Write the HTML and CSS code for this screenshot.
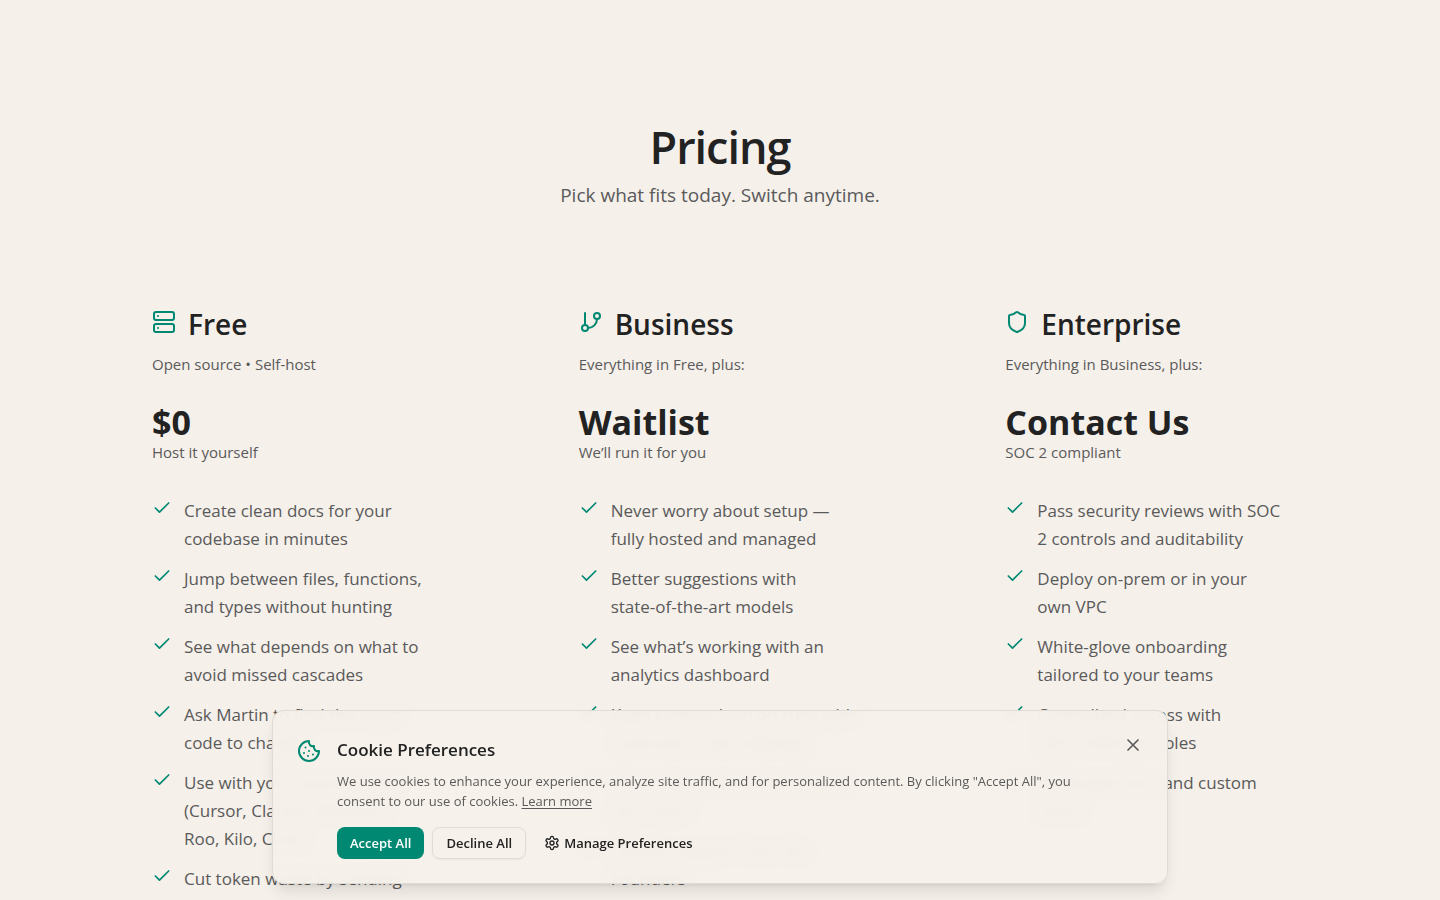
FILE: index.html
```html
<!DOCTYPE html>
<html lang="en">
<head>
    <meta charset="UTF-8">
    <meta name="viewport" content="width=device-width, initial-scale=1">
    <title>Pricing</title>
    <link rel="stylesheet" href="styles.css">
</head>
<body>
<svg class="sprite" aria-hidden="true">
    <symbol id="check" viewBox="0 0 24 24"><path d="M20 6 9 17l-5-5"/></symbol>
</svg>

<main class="pricing">
    <header class="intro">
        <h1>Pricing</h1>
        <p>Pick what fits today. Switch anytime.</p>
    </header>

    <div class="plans">
        <section class="plan">
            <div class="plan-title">
                <svg class="icon" viewBox="0 0 24 24"><rect x="2" y="2" width="20" height="8" rx="2"/><rect x="2" y="14" width="20" height="8" rx="2"/><path d="M6 6h.01M6 18h.01"/></svg>
                <h2>Free</h2>
            </div>
            <p class="note">Open source • Self-host</p>
            <p class="price">$0</p>
            <p class="note">Host it yourself</p>
            <ul class="features">
                <li><svg class="check"><use href="#check"/></svg><span>Create clean docs for your codebase in minutes</span></li>
                <li><svg class="check"><use href="#check"/></svg><span>Jump between files, functions, and types without hunting</span></li>
                <li><svg class="check"><use href="#check"/></svg><span>See what depends on what to avoid missed cascades</span></li>
                <li><svg class="check"><use href="#check"/></svg><span>Ask Martin to find the exact code to change</span></li>
                <li><svg class="check"><use href="#check"/></svg><span>Use with your favorite tools (Cursor, Claude, Windsurf,<br>Roo, Kilo, Cline)</span></li>
                <li><svg class="check"><use href="#check"/></svg><span>Cut token waste by sending only relevant pieces of code</span></li>
            </ul>
        </section>

        <section class="plan">
            <div class="plan-title">
                <svg class="icon" viewBox="0 0 24 24"><path d="M6 3v12"/><circle cx="18" cy="6" r="3"/><circle cx="6" cy="18" r="3"/><path d="M18 9a9 9 0 0 1-9 9"/></svg>
                <h2>Business</h2>
            </div>
            <p class="note">Everything in Free, plus:</p>
            <p class="price">Waitlist</p>
            <p class="note">We’ll run it for you</p>
            <ul class="features">
                <li><svg class="check"><use href="#check"/></svg><span>Never worry about setup — fully hosted and managed</span></li>
                <li><svg class="check"><use href="#check"/></svg><span>Better suggestions with <span class="nowrap">state-of-the-art</span> models</span></li>
                <li><svg class="check"><use href="#check"/></svg><span>See what’s working with an analytics dashboard</span></li>
                <li><svg class="check"><use href="#check"/></svg><span>Keep context lean on runs with automatic code indexing</span></li>
                <li><svg class="check"><use href="#check"/></svg><span>Share docs and context across your team</span></li>
                <li><svg class="check"><use href="#check"/></svg><span>Priority support from the Founders</span></li>
            </ul>
        </section>

        <section class="plan">
            <div class="plan-title">
                <svg class="icon" viewBox="0 0 24 24"><path d="M20 13c0 5-3.500 7.500-7.660 8.950a1 1 0 0 1-.67-.01C7.500 20.500 4 18 4 13V6a1 1 0 0 1 1-1c2 0 4.500-1.200 6.240-2.720a1.170 1.170 0 0 1 1.520 0C14.510 3.810 17 5 19 5a1 1 0 0 1 1 1z"/></svg>
                <h2>Enterprise</h2>
            </div>
            <p class="note">Everything in Business, plus:</p>
            <p class="price">Contact Us</p>
            <p class="note">SOC 2 compliant</p>
            <ul class="features">
                <li><svg class="check"><use href="#check"/></svg><span>Pass security reviews with SOC 2 controls and auditability</span></li>
                <li><svg class="check"><use href="#check"/></svg><span>Deploy on-prem or in your own VPC</span></li>
                <li><svg class="check"><use href="#check"/></svg><span>White-glove onboarding tailored to your teams</span></li>
                <li><svg class="check"><use href="#check"/></svg><span>Centralized access with<br>SSO, SCIM and roles</span></li>
                <li><svg class="check"><use href="#check"/></svg><span>Dedicated SLAs and custom terms</span></li>
            </ul>
        </section>
    </div>
</main>

<aside class="cookie" aria-labelledby="cookie-title">
    <svg class="icon" viewBox="0 0 24 24"><path d="M12 2a10 10 0 1 0 10 10 4 4 0 0 1-5-5 4 4 0 0 1-5-5"/><path d="M8.500 8.500v.01M16 15.500v.01M12 12v.01M11 17v.01M7 14v.01"/></svg>
    <div class="cookie-body">
        <h3 id="cookie-title">Cookie Preferences</h3>
        <p>We use cookies to enhance your experience, analyze site traffic, and for personalized content. By clicking "Accept All", you consent to our use of cookies. <a href="#">Learn more</a></p>
        <div class="actions">
            <button type="button" class="btn btn-primary">Accept All</button>
            <button type="button" class="btn btn-outline">Decline All</button>
            <button type="button" class="btn btn-ghost">
                <svg viewBox="0 0 24 24"><path d="M12.220 2h-.44a2 2 0 0 0-2 2v.18a2 2 0 0 1-1 1.730l-.43.25a2 2 0 0 1-2 0l-.15-.08a2 2 0 0 0-2.730.73l-.22.38a2 2 0 0 0 .73 2.730l.15.1a2 2 0 0 1 1 1.720v.51a2 2 0 0 1-1 1.740l-.15.09a2 2 0 0 0-.73 2.730l.22.38a2 2 0 0 0 2.730.73l.15-.08a2 2 0 0 1 2 0l.43.25a2 2 0 0 1 1 1.730V20a2 2 0 0 0 2 2h.44a2 2 0 0 0 2-2v-.18a2 2 0 0 1 1-1.730l.43-.25a2 2 0 0 1 2 0l.15.08a2 2 0 0 0 2.730-.73l.22-.39a2 2 0 0 0-.73-2.730l-.15-.08a2 2 0 0 1-1-1.740v-.5a2 2 0 0 1 1-1.740l.15-.09a2 2 0 0 0 .73-2.730l-.22-.38a2 2 0 0 0-2.730-.73l-.15.08a2 2 0 0 1-2 0l-.43-.25a2 2 0 0 1-1-1.730V4a2 2 0 0 0-2-2z"/><circle cx="12" cy="12" r="3"/></svg>
                Manage Preferences
            </button>
        </div>
    </div>
    <button type="button" class="close" aria-label="Close">
        <svg viewBox="0 0 24 24"><path d="M18 6 6 18M6 6l12 12"/></svg>
    </button>
</aside>
</body>
</html>
```
FILE: styles.css
```css
* {
    box-sizing: border-box;
}

html {
    scrollbar-width: none;
}

body, h1, h2, h3, p, ul {
    margin: 0;
    padding: 0;
}

body {
    background: #f5f0ea;
    color: #222;
    font-family: "Open Sans", "Noto Sans", sans-serif;
}

button {
    font-family: inherit;
    cursor: pointer;
}

svg {
    flex: none;
    fill: none;
    stroke: currentColor;
    stroke-width: 2;
    stroke-linecap: round;
    stroke-linejoin: round;
}

.sprite {
    display: none;
}

.nowrap {
    white-space: nowrap;
}

.icon {
    width: 24px;
    height: 24px;
    color: #008872;
}

.pricing {
    max-width: 1280px;
    margin: 0 auto;
    padding-top: 123px;
}

.intro {
    text-align: center;
}

.intro h1 {
    font-size: 45px;
    font-weight: 600;
    line-height: 48px;
    letter-spacing: -1px;
}

.intro p {
    margin-top: 10px;
    color: #5a5a5a;
    font-size: 19px;
    line-height: 28px;
}

.plans {
    display: grid;
    grid-template-columns: repeat(3, 1fr);
    margin-top: 101px;
}

.plan {
    padding: 0 72px;
}

.plan-title {
    display: flex;
    gap: 12px;
}

.plan-title h2 {
    font-size: 28px;
    font-weight: 600;
    line-height: 28px;
}

.note {
    color: #5a5a5a;
    font-size: 15px;
    line-height: 20px;
}

.plan-title + .note {
    margin-top: 16px;
}

.price {
    margin-top: 28px;
    font-size: 34px;
    font-weight: 700;
    line-height: 40px;
}

.features {
    display: grid;
    gap: 12px;
    margin-top: 35px;
    padding-right: 4px;
    list-style: none;
}

.features li {
    display: flex;
    gap: 12px;
    color: #5a5a5a;
    font-size: 17px;
    line-height: 28px;
}

.check {
    width: 20px;
    height: 20px;
    margin-top: 1px;
    color: #008872;
}

.cookie {
    position: fixed;
    right: 16px;
    bottom: 16px;
    left: 16px;
    display: flex;
    gap: 16px;
    max-width: 896px;
    margin: 0 auto;
    padding: 24px;
    border: 1px solid #dfdcd6;
    border-radius: 12px;
    background: rgba(245, 240, 234, .95);
    box-shadow: 0 10px 15px -3px rgba(0, 0, 0, .1), 0 4px 6px -4px rgba(0, 0, 0, .1);
    backdrop-filter: blur(8px);
}

.cookie .icon {
    margin-top: 4px;
}

.cookie-body {
    flex: 1;
}

.cookie h3 {
    padding-top: 1px;
    font-size: 17px;
    font-weight: 600;
    line-height: 28px;
}

.cookie p {
    margin-top: 7px;
    color: #5a5a5a;
    font-size: 13px;
    line-height: 20px;
}

.cookie a {
    color: inherit;
    text-underline-offset: 2px;
}

.actions {
    display: flex;
    gap: 8px;
    margin-top: 16px;
}

.btn {
    display: flex;
    align-items: center;
    gap: 4px;
    height: 32px;
    padding: 0 13px;
    border: 0;
    border-radius: 8px;
    background: none;
    color: #222;
    font-size: 13px;
    font-weight: 600;
}

.btn svg {
    width: 16px;
    height: 16px;
}

.btn-primary {
    background: #008872;
    color: #fff;
}

.btn-outline {
    border: 1px solid #dfdcd6;
    box-shadow: 0 1px 2px rgba(0, 0, 0, .05);
}

.btn-ghost {
    padding: 0 10px;
}

.close {
    align-self: flex-start;
    width: 20px;
    height: 20px;
    padding: 0;
    border: 0;
    background: none;
    color: #5a5a5a;
}

.close svg {
    display: block;
    width: 20px;
    height: 20px;
}
```
